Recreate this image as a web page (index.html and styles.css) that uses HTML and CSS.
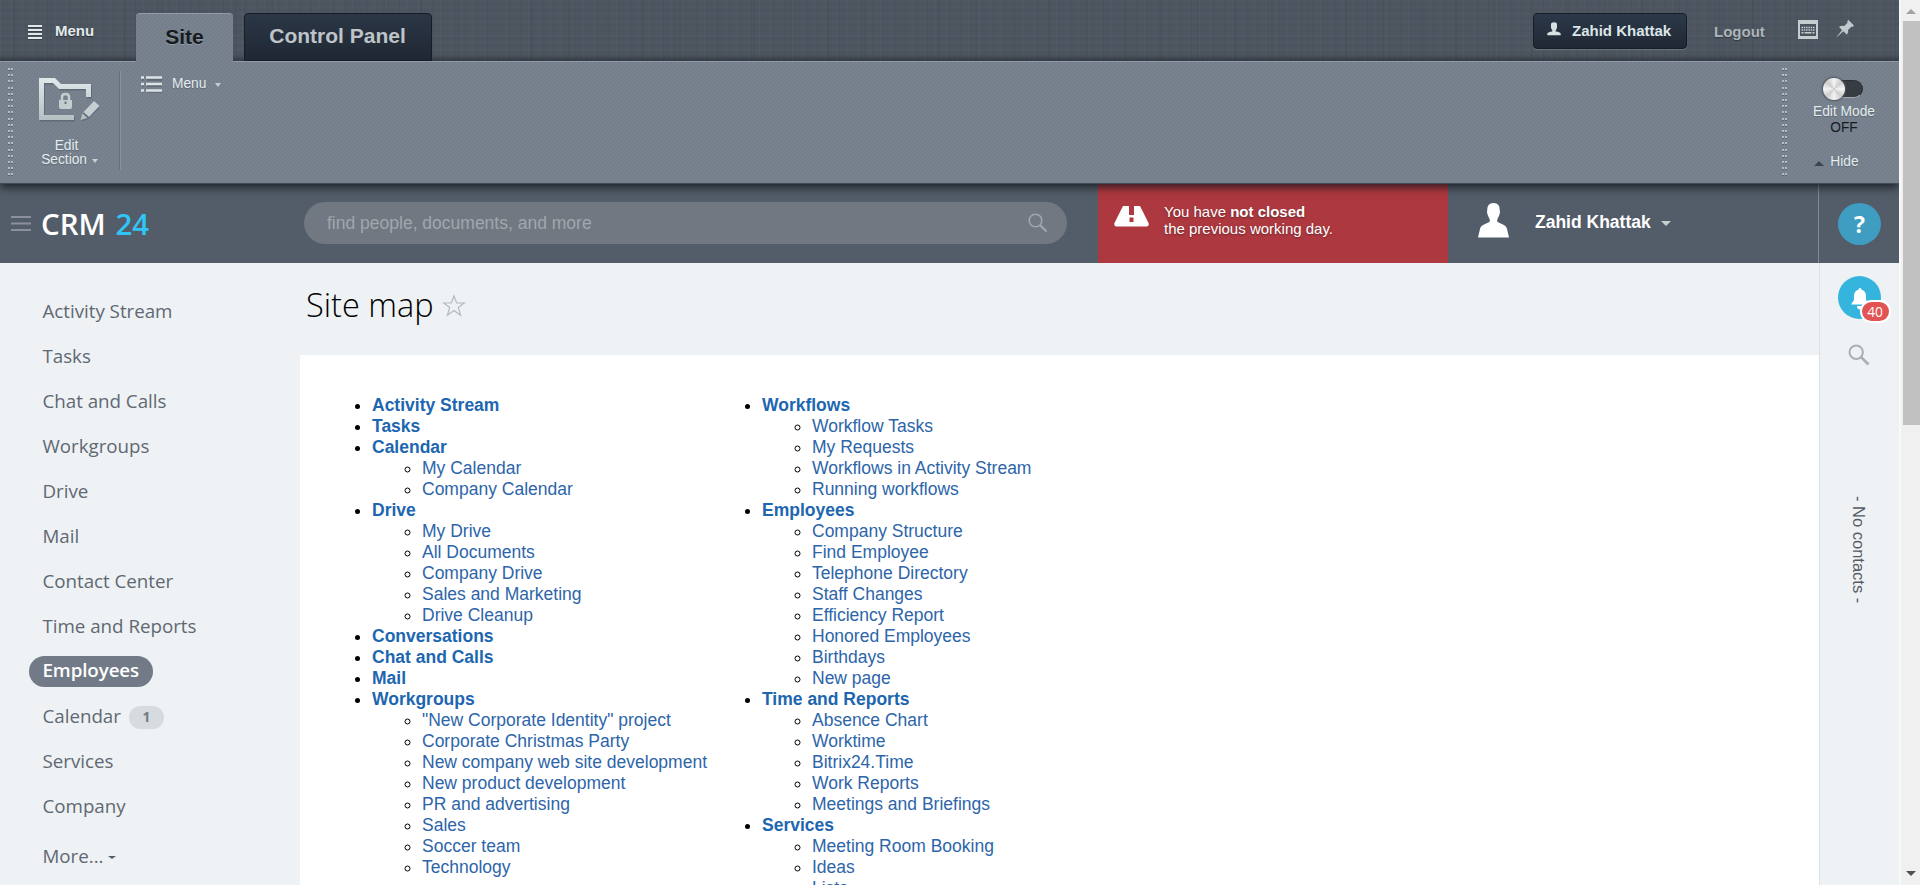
FILE: index.html
```html
<!DOCTYPE html>
<html lang="en">
<head>
<meta charset="utf-8">
<title>Site map</title>
<link rel="stylesheet" href="styles.css">
</head>
<body>
<div class="window">
<div class="page">
  <div class="admin-top">
    <a class="top-menu"><svg width="16" height="16" viewBox="0 0 16 16"><path d="M1 3h14M1 7h14M1 11h14M1 15h14" stroke="#1b222b" stroke-width="1.500" opacity=".5"/><path d="M1 2h14M1 6h14M1 10h14M1 14h14" stroke="#e2e8ea" stroke-width="2"/></svg><span>Menu</span></a>
    <a class="tab tab-site">Site</a>
    <a class="tab tab-panel">Control Panel</a>
    <div class="top-right">
      <a class="user-button"><svg width="14" height="14" viewBox="0 0 14 14"><path d="M4 2.500Q4 .3 7 .3T10 2.500V5.500Q9.600 7.500 8.700 8V9.500Q13.700 10 13.700 12V13.300H.3V12Q.3 10 5.300 9.500V8Q4.400 7.500 4 5.500Z" fill="#d7e1e4"/></svg><span>Zahid Khattak</span></a>
      <a class="logout">Logout</a>
      <svg class="keyboard" width="21" height="20" viewBox="0 0 21 20"><path d="M0 0H20V19H0Z" fill="#c5cdd0"/><path d="M2 4H18V16H2Z" fill="#4b535f"/><path d="M3.500 7.500h13M3.500 10h13" stroke="#c5cdd0" stroke-width="1.500" stroke-dasharray="1.500 .8"/><path d="M3.500 12.700h2M6.500 12.700h7M14.500 12.700h2" stroke="#c5cdd0" stroke-width="1.500"/></svg>
      <svg class="pin" width="19" height="19" viewBox="0 0 19 19"><path d="M12.500 0L18 5.500L16.500 7L15.500 6.600L12 10Q12.800 12.500 11 14.800L7.300 11.200L0 18L6 10L3 6.900Q5.500 5.200 8.200 6L11.700 2.600L11.200 1.300Z" fill="#c1c9cc"/></svg>
    </div>
  </div>
  <div class="ribbon">
    <div class="grip"></div>
    <a class="edit-section">
      <svg width="62" height="46" viewBox="0 0 62 46"><defs><linearGradient id="steel" x1="0" y1="0" x2="0" y2="1"><stop offset="0" stop-color="#e0e8ea"/><stop offset="1" stop-color="#b4bfc1"/></linearGradient></defs><g fill="#384452" opacity=".35" transform="translate(1 1.500)"><path d="M0 0H16L22 6H52V19H47V11H20L14 5H5V37H35V42H0Z"/><path d="M55 23L60 28L49 39L42 42L44 34Z"/></g><path d="M0 0H16L22 6H52V19H47V11H20L14 5H5V37H35V42H0Z" fill="url(#steel)"/><path d="M20 22H33V29Q33 31 31 31H22Q20 31 20 29Z" fill="#c3cdd0"/><path d="M23 23V19Q23 16 26.500 16T30 19V23" fill="none" stroke="#c3cdd0" stroke-width="2.400"/><path d="M26.500 23.500V26" stroke="#6b7681" stroke-width="2"/><path d="M55 23L60.500 28L50 39L44.500 34Z" fill="#c4ced1"/><path d="M43.500 35.500L48.500 40L41.500 42Z" fill="#b7c1c4"/></svg>
      <span>Edit</span><span class="with-caret">Section <i class="caret"></i></span>
    </a>
    <div class="divider"></div>
    <a class="ribbon-menu"><svg width="22" height="17" viewBox="0 0 22 17"><path d="M1 3.500h2M6 3.500h15M1 9.500h2M6 9.500h15M1 15.500h2M6 15.500h15" stroke="#46515e" stroke-width="2.500" opacity=".5"/><path d="M0 1.500h3M5 1.500h16M0 8h3M5 8h16M0 14.500h3M5 14.500h16" stroke="#dce4e6" stroke-width="2.400"/></svg><span>Menu</span><i class="caret"></i></a>
    <div class="grip grip-right"></div>
    <div class="mode">
      <div class="toggle"><span class="knob"></span></div>
      <span>Edit Mode</span><span class="off">OFF</span>
      <span class="hide"><i class="caret-up"></i>Hide</span>
    </div>
  </div>
  <header class="header">
    <div class="brand"><svg width="20" height="16" viewBox="0 0 20 16"><path d="M0 1h20M0 7.500h20M0 14h20" stroke="#8a919c" stroke-width="2"/></svg><span class="logo">CRM <b>24</b></span></div>
    <div class="search"><span>find people, documents, and more</span><svg width="20" height="20" viewBox="0 0 20 20"><circle cx="7.500" cy="7.500" r="6.300" fill="none" stroke="#a1a7af" stroke-width="1.600"/><path d="M12 12L18.500 18.500" stroke="#a1a7af" stroke-width="2.200"/></svg></div>
    <div class="workday"><svg width="35" height="21" viewBox="0 0 35 21"><path fill-rule="evenodd" d="M9 0H26L34.500 17Q35.500 20.500 32.500 20.500H2.500Q-.5 20.500 .5 17ZM15 0V9H20V0ZM15.500 11.500V16H19.500V11.500Z" fill="#fff"/></svg><p>You have <b>not closed</b><br>the previous working day.</p></div>
    <div class="account"><svg width="31" height="35" viewBox="0 0 31 35"><path d="M15.500 0C20 0 22 3 21.700 7.500Q22.500 8.500 21.700 10.500C21 14 19.500 15 19.200 17V18.500C21 20.500 28 21 29 26L31 34.500H0L2 26C3 21 10 20.500 11.800 18.500V17C11.500 15 10 14 9.300 10.500Q8.500 8.500 9.300 7.500C9 3 11 0 15.500 0Z" fill="#fff"/></svg><span>Zahid Khattak</span><i class="caret wide"></i></div>
    <div class="help"><span>?</span></div>
  </header>
  <div class="body">
    <nav class="side">
      <a>Activity Stream</a><a>Tasks</a><a>Chat and Calls</a><a>Workgroups</a><a>Drive</a><a>Mail</a><a>Contact Center</a><a>Time and Reports</a>
      <a class="active"><span>Employees</span></a>
      <a>Calendar<em>1</em></a><a>Services</a><a>Company</a><a class="more">More...<i></i></a>
    </nav>
    <main class="main">
      <h1>Site map<svg width="24" height="23" viewBox="0 0 24 23"><path d="M12 2L14.700 9H22.300L16.300 13.500L18.600 21.200L12 16.500L5.400 21.200L7.700 13.500L1.700 9H9.300Z" fill="none" stroke="#b5babf" stroke-width="1.200"/></svg></h1>
      <div class="card">
        <ul class="map">
          <li><a>Activity Stream</a></li>
          <li><a>Tasks</a></li>
          <li><a>Calendar</a><ul><li>My Calendar</li><li>Company Calendar</li></ul></li>
          <li><a>Drive</a><ul><li>My Drive</li><li>All Documents</li><li>Company Drive</li><li>Sales and Marketing</li><li>Drive Cleanup</li></ul></li>
          <li><a>Conversations</a></li>
          <li><a>Chat and Calls</a></li>
          <li><a>Mail</a></li>
          <li><a>Workgroups</a><ul><li>"New Corporate Identity" project</li><li>Corporate Christmas Party</li><li>New company web site development</li><li>New product development</li><li>PR and advertising</li><li>Sales</li><li>Soccer team</li><li>Technology</li></ul></li>
        </ul>
        <ul class="map">
          <li><a>Workflows</a><ul><li>Workflow Tasks</li><li>My Requests</li><li>Workflows in Activity Stream</li><li>Running workflows</li></ul></li>
          <li><a>Employees</a><ul><li>Company Structure</li><li>Find Employee</li><li>Telephone Directory</li><li>Staff Changes</li><li>Efficiency Report</li><li>Honored Employees</li><li>Birthdays</li><li>New page</li></ul></li>
          <li><a>Time and Reports</a><ul><li>Absence Chart</li><li>Worktime</li><li>Bitrix24.Time</li><li>Work Reports</li><li>Meetings and Briefings</li></ul></li>
          <li><a>Services</a><ul><li>Meeting Room Booking</li><li>Ideas</li><li>Lists</li></ul></li>
        </ul>
      </div>
    </main>
    <aside class="rail">
      <div class="bell"><svg width="18" height="22" viewBox="0 0 18 22"><path d="M9 0Q10.500 0 10.600 1.800Q15 3 15 8V12L18 16.500H0L3 12V8Q3 3 7.400 1.800Q7.500 0 9 0ZM6 18H12Q12 21.500 9 21.500T6 18Z" fill="#fff"/></svg><span class="count">40</span></div>
      <svg class="find" width="22" height="22" viewBox="0 0 22 22"><circle cx="8.200" cy="8.200" r="6.700" fill="none" stroke="#a8b0b7" stroke-width="2"/><path d="M12.500 12.500L20.500 20.500" stroke="#a8b0b7" stroke-width="2.600"/></svg>
      <span class="contacts">- No contacts -</span>
    </aside>
  </div>
</div>
<div class="scrollbar"><i class="up"></i><span></span><i class="down"></i></div>
</div>
</body>
</html>
```
FILE: styles.css
```css
* { box-sizing: border-box; }
body { margin: 0; font-family: "Liberation Sans", Arial, sans-serif; font-size: 17.5px; background: #eef2f4; }
svg { display: block; flex: none; }
.window { display: grid; grid-template-columns: 1899px 21px; height: 885px; overflow: hidden; }
.page { display: flex; flex-direction: column; height: 885px; overflow: hidden; }

/* Admin top bar */
.admin-top {
  display: flex; height: 61px; flex: none; padding-left: 27px;
  background:
    linear-gradient(rgba(30,36,44,0) 88%, rgba(30,36,44,.5)),
    repeating-linear-gradient(90deg, rgba(255,255,255,.02) 0 1px, transparent 1px 3px, rgba(0,0,0,.04) 3px 4px, transparent 4px 11px),
    repeating-linear-gradient(90deg, transparent 0 13px, rgba(0,0,0,.03) 13px 15px, transparent 15px 37px),
    repeating-linear-gradient(rgba(255,255,255,.02) 0 1px, transparent 1px 3px, rgba(0,0,0,.04) 3px 4px, transparent 4px 7px),
    #4d5560;
}
.top-menu { display: flex; gap: 12px; width: 109px; padding-top: 24px; font-weight: bold; font-size: 15px; color: #e4eaec; text-shadow: 0 1px 1px #222a33; }
.top-menu span { margin-top: -2px; }
.tab { height: 49px; margin-top: 13px; font-weight: bold; font-size: 21px; text-align: center; line-height: 46px; border-radius: 4px 4px 0 0; z-index: 3; }
.tab-site, .ribbon {
  background:
    conic-gradient(#6c7784 90deg, transparent 90deg) -1px 1px / 4px 4px,
    conic-gradient(#707b87 90deg, transparent 90deg) 1px 3px / 4px 4px,
    #78838f;
  background:
    linear-gradient(#6e7985, #6e7985) 0 0 / 0 0 no-repeat,
    repeating-conic-gradient(#747f8b 0 25%, #79838f 0 50%) 0 0 / 4px 4px;
}
.tab-site { width: 97px; color: #161b20; border-top: 1px solid #9299a7; text-shadow: 0 1px 0 #929ba5; }
.tab-panel { width: 188px; height: 48px; margin-left: 11px; color: #bfc4c8; border: 1px solid #171d24; background: linear-gradient(#2b3746, #202733); line-height: 44px; padding-right: 1px; }
.top-right { display: flex; margin-left: auto; width: 366px; font-weight: bold; font-size: 15px; }
.user-button { display: flex; align-items: center; gap: 11px; width: 154px; height: 36px; margin-top: 13px; padding: 0 0 1px 13px; border: 1px solid #171d26; border-radius: 4px; background: linear-gradient(#2c394a, #202733); box-shadow: 0 1px 1px #6c747d; color: #dce5e8; }
.user-button svg { margin-top: -3px; }
.logout { width: 83px; padding: 23px 0 0 27px; color: #aeb5b9; text-shadow: 0 1px 1px #303740; }
.keyboard { margin: 20px 0 0 28px; }
.pin { margin: 20px 0 0 17px; }

/* Ribbon */
.ribbon {
  display: flex; height: 123px; flex: none; padding: 4px 0 0 7px; color: #e5ecef; font-size: 13.75px;
  border-top: 1px solid #9299a7; border-bottom: 1px solid #414a57;
  box-shadow: 0 3px 9px rgba(15,20,27,.85); z-index: 2; clip-path: inset(0 0 -16px 0); text-shadow: 0 1px 1px #5b6672;
}
.grip { width: 7px; height: 111px; background: repeating-linear-gradient(transparent 0 2px, #b4bcc2 2px 4px, #5c6672 4px 5px, transparent 5px 6.200px); -webkit-mask: linear-gradient(90deg, transparent 1px, #000 1px 3px, transparent 3px 4px, #000 4px 6px, transparent 6px); mask: linear-gradient(90deg, transparent 1px, #000 1px 3px, transparent 3px 4px, #000 4px 6px, transparent 6px); }
.edit-section { display: flex; flex-direction: column; align-items: center; width: 105px; padding-top: 12px; line-height: 14px; }
.edit-section svg { margin: 0 0 15px 7px; }
.caret { display: inline-block; width: 0; height: 0; border: 3.500px solid transparent; border-top: 4px solid #c7cfd3; border-bottom: 0; }
.with-caret { padding-left: 6px; }
.with-caret .caret { margin: 0 0 1px 1px; }
.divider { width: 2px; height: 99px; margin-top: 5px; background: linear-gradient(90deg, #667079 1px, #8a949e 1px); }
.ribbon-menu { display: flex; padding: 10px 0 0 20px; height: 30px; }
.ribbon-menu span { margin: 0 9px 0 9px; }
.ribbon-menu .caret { margin-top: 7px; }
.grip-right { margin: 0 1px 0 auto; }
.mode { display: flex; flex-direction: column; align-items: center; width: 110px; padding: 14px 0 0; line-height: 16px; }
.toggle { width: 40px; height: 18px; margin: 0 2px 6px 0; border-radius: 9px; background: #373b42; border: 1px solid #2b3037; border-bottom-color: #a0a8b0; }
.knob { display: block; width: 22px; height: 22px; margin: -3px 0 0 -1px; border-radius: 50%; background: repeating-conic-gradient(#f4f4f4 0deg, #cdcdcd 45deg, #f4f4f4 90deg); box-shadow: 0 0 2px 1px #4c535c; }
.off { color: #141a22; text-shadow: none; }
.hide { margin: 18px 15px 0 0; display: flex; align-items: center; gap: 6px; }
.caret-up { border: 5px solid transparent; border-top: 0; border-bottom: 5px solid #3c4550; margin-top: 3px; }

/* Site header */
.header { display: flex; height: 79px; flex: none; background: #535c69; color: #fff; }
.brand { display: flex; width: 304px; padding: 32px 0 0 11px; }
.logo { margin: -12px 0 0 10px; font: 600 29.500px/40px "Open Sans", sans-serif; white-space: pre; }
.logo b { font-weight: 600; color: #2fc6f7; margin-left: 2px; }
.search { display: flex; align-items: center; justify-content: space-between; width: 763px; height: 42px; margin-top: 18px; padding: 0 19px 0 23px; border-radius: 21px; background: #717882; color: #a0a7ae; }
.workday { display: flex; width: 350px; margin-left: 31px; padding: 22px 0 0 16px; background: #ae383f; font-size: 15px; line-height: 17px; text-shadow: 0 1px 2px #68272c; }
.workday p { margin: -3px 0 0 15px; }
.account { display: flex; width: 371px; padding: 19px 0 0 30px; font-weight: bold; border-right: 1px solid #848b94; }
.account span { margin: 9px 10px 0 26px; height: 24px; }
.wide { margin-top: 18px; border-width: 5px 5px 0; }
.help { display: flex; justify-content: center; width: 80px; padding-top: 19px; }
.help span { width: 43px; height: 42px; margin-left: 1px; border-radius: 50%; background: #3e9dc0; text-align: center; font: bold 23px/42px "Open Sans", sans-serif; }

/* Body */
.body { display: flex; flex: 1; min-height: 0; }
.side { width: 300px; padding: 25px 0 0 42.500px; font: 400 18.750px/45px "Open Sans", sans-serif; letter-spacing: -.02px; color: #5f6873; }
.side a { display: block; height: 45px; white-space: nowrap; }
.side .active span { display: inline-block; height: 31px; line-height: 27px; padding: 0 13.500px 0 14px; margin: -1px 0 0 -14px; border-radius: 16px; background: #717a86; color: #fff; font-weight: 600; letter-spacing: -.1px; vertical-align: 1px; }
.side em { display: inline-block; width: 35px; height: 23px; margin-left: 8px; vertical-align: 1px; border-radius: 12px; background: #d6dbdf; color: #717a84; text-align: center; font: bold 13.750px/22px "Open Sans", sans-serif; }
.side .more { margin-top: 5px; }
.more i { display: inline-block; margin-left: 5px; vertical-align: 4px; border: 4px solid transparent; border-top-color: #535c69; border-bottom: 0; border-top-width: 3px; }
.main { width: 1519px; }
h1 { display: flex; align-items: center; gap: 8px; height: 92px; margin: 0; padding: 0 0 8px 6px; font: 300 32.500px/44px "Open Sans", sans-serif; color: #000; }
h1 svg { margin-top: 1px; }
.card { display: flex; height: 530px; padding: 40px 0 0 32px; background: #fff; overflow: hidden; }
.map { margin: 0; padding: 0 0 0 40px; width: 390px; line-height: 21px; }
.map > li { color: #000; }
.map a { font-weight: bold; color: #1d66b0; }
.map ul { padding-left: 50px; margin: 0; }
.map ul li { color: #2d65a9; white-space: nowrap; }
.map li::marker { color: #000; }
.rail { display: flex; flex-direction: column; align-items: center; width: 80px; border-left: 1px solid #dce1e4; padding-top: 13px; }
.bell { position: relative; width: 43px; height: 43px; border-radius: 50%; background: #35b5de; padding: 12px 0 0 13px; margin-right: 1px; }
.count { position: absolute; left: 22px; top: 24px; width: 31px; height: 23px; border: 2px solid #fff; border-radius: 12px; background: #e25453; color: #fff; text-align: center; font: 13.750px/19px "Open Sans", sans-serif; }
.find { margin: 25px 1px 0 0; }
.contacts { writing-mode: vertical-rl; margin: 130px 2px 0 0; font-size: 16.500px; color: #555b63; white-space: nowrap; }

/* Page scrollbar */
.scrollbar { display: flex; flex-direction: column; align-items: center; background: #f0f0f0; border-left: 2px solid #f7f8f8; }
.scrollbar span { width: 17px; height: 404px; margin-left: 2px; background: #c1c1c1; }
.up { margin: 9px 0 7px; border: 5px solid transparent; border-top: 0; border-bottom-color: #a3a3a3; }
.down { margin: auto 0 9px; border: 5px solid transparent; border-bottom: 0; border-top-color: #505050; }
```
